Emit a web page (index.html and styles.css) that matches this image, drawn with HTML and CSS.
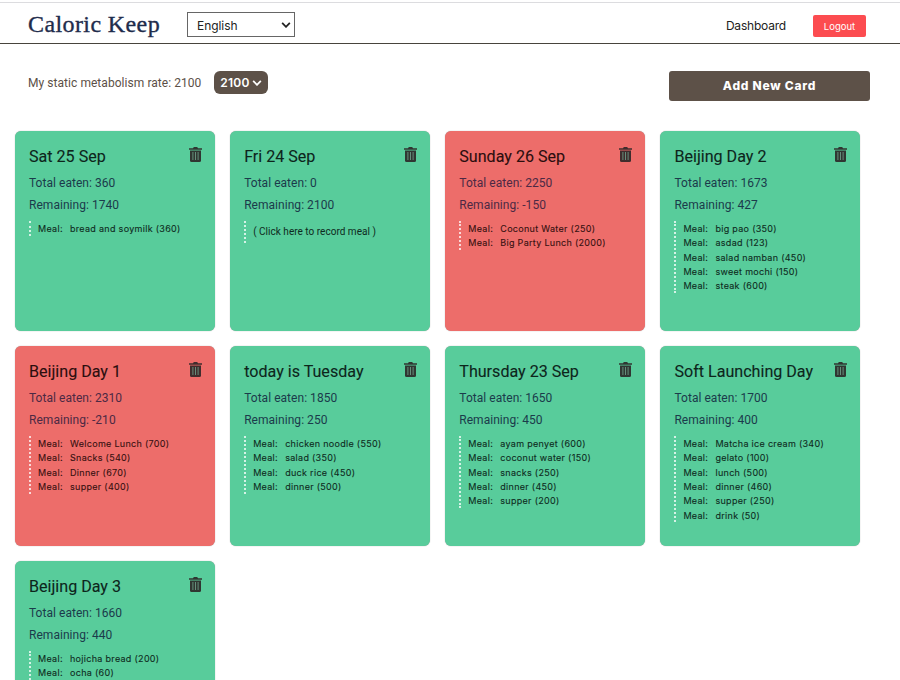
FILE: index.html
```html
<!DOCTYPE html>
<html lang="en">
<head>
<meta charset="utf-8">
<title>Caloric Keep</title>
<link rel="stylesheet" href="styles.css">
</head>
<body>
<svg class="defs" width="0" height="0"><symbol id="trash" viewBox="0 0 13 15"><path fill="currentColor" d="M0 1.2h4L4.8 0h3.4L9 1.2h4v1.6H0z"/><path fill="currentColor" d="M1 3.5h11V13.5Q12 15 10.5 15h-8Q1 15 1 13.5z"/><path class="slots" d="M3.9 5v8M6.5 5v8M9.1 5v8"/></symbol></svg>
<header class="header">
  <h1 class="logo">Caloric Keep</h1>
  <button class="language">English<svg class="chevron" viewBox="0 0 8 5"><path d="M.8.8 4 4 7.2.8"/></svg></button>
  <a class="dashboard">Dashboard</a>
  <button class="logout">Logout</button>
</header>
<section class="toolbar">
  <span class="rate">My static metabolism rate: 2100</span>
  <button class="rate-select">2100<svg class="chevron" viewBox="0 0 8 5"><path d="M.8.8 4 4 7.2.8"/></svg></button>
  <button class="add">Add New Card</button>
</section>
<main class="cards">
  <article class="card">
    <svg class="trash"><use href="#trash"/></svg>
    <h2>Sat 25 Sep</h2><p>Total eaten: 360</p><p>Remaining: 1740</p>
    <ul><li><b>Meal:</b>bread and soymilk (360)</li></ul>
  </article>
  <article class="card">
    <svg class="trash"><use href="#trash"/></svg>
    <h2>Fri 24 Sep</h2><p>Total eaten: 0</p><p>Remaining: 2100</p>
    <div class="empty">( Click here to record meal )</div>
  </article>
  <article class="card over">
    <svg class="trash"><use href="#trash"/></svg>
    <h2>Sunday 26 Sep</h2><p>Total eaten: 2250</p><p>Remaining: -150</p>
    <ul><li><b>Meal:</b>Coconut Water (250)</li><li><b>Meal:</b>Big Party Lunch (2000)</li></ul>
  </article>
  <article class="card">
    <svg class="trash"><use href="#trash"/></svg>
    <h2>Beijing Day 2</h2><p>Total eaten: 1673</p><p>Remaining: 427</p>
    <ul><li><b>Meal:</b>big pao (350)</li><li><b>Meal:</b>asdad (123)</li><li><b>Meal:</b>salad namban (450)</li><li><b>Meal:</b>sweet mochi (150)</li><li><b>Meal:</b>steak (600)</li></ul>
  </article>
  <article class="card over">
    <svg class="trash"><use href="#trash"/></svg>
    <h2>Beijing Day 1</h2><p>Total eaten: 2310</p><p>Remaining: -210</p>
    <ul><li><b>Meal:</b>Welcome Lunch (700)</li><li><b>Meal:</b>Snacks (540)</li><li><b>Meal:</b>Dinner (670)</li><li><b>Meal:</b>supper (400)</li></ul>
  </article>
  <article class="card">
    <svg class="trash"><use href="#trash"/></svg>
    <h2>today is Tuesday</h2><p>Total eaten: 1850</p><p>Remaining: 250</p>
    <ul><li><b>Meal:</b>chicken noodle (550)</li><li><b>Meal:</b>salad (350)</li><li><b>Meal:</b>duck rice (450)</li><li><b>Meal:</b>dinner (500)</li></ul>
  </article>
  <article class="card">
    <svg class="trash"><use href="#trash"/></svg>
    <h2>Thursday 23 Sep</h2><p>Total eaten: 1650</p><p>Remaining: 450</p>
    <ul><li><b>Meal:</b>ayam penyet (600)</li><li><b>Meal:</b>coconut water (150)</li><li><b>Meal:</b>snacks (250)</li><li><b>Meal:</b>dinner (450)</li><li><b>Meal:</b>supper (200)</li></ul>
  </article>
  <article class="card">
    <svg class="trash"><use href="#trash"/></svg>
    <h2>Soft Launching Day</h2><p>Total eaten: 1700</p><p>Remaining: 400</p>
    <ul><li><b>Meal:</b>Matcha ice cream (340)</li><li><b>Meal:</b>gelato (100)</li><li><b>Meal:</b>lunch (500)</li><li><b>Meal:</b>dinner (460)</li><li><b>Meal:</b>supper (250)</li><li><b>Meal:</b>drink (50)</li></ul>
  </article>
  <article class="card last">
    <svg class="trash"><use href="#trash"/></svg>
    <h2>Beijing Day 3</h2><p>Total eaten: 1660</p><p>Remaining: 440</p>
    <ul><li><b>Meal:</b>hojicha bread (200)</li><li><b>Meal:</b>ocha (60)</li></ul>
  </article>
</main>
</body>
</html>
```
FILE: styles.css
```css
* { box-sizing: border-box; }
body { height: 680px; overflow: hidden; display: flow-root; margin: 0; background: #fff; color: #222; font-family: Roboto, sans-serif; }
h1, h2, p, ul { margin: 0; padding: 0; font-weight: 400; }
button { border: 0; padding: 0; margin: 0; font-family: Inter, sans-serif; }
.defs { position: absolute; }

.header {
  display: flex;
  align-items: center;
  height: 42px;
  margin-top: 2px;
  padding: 3px 34px 0 28px;
  border-top: 1px solid #dcdcdf;
  border-bottom: 1px solid #48443d;
}
.logo {
  width: 159px;
  margin-top: -2px;
  color: #1f2c4c;
  font: 400 24px/30px "Liberation Serif", serif;
  letter-spacing: .4px;
  -webkit-text-stroke: .35px #1f2c4c;
  white-space: nowrap;
}
.language {
  display: flex;
  align-items: center;
  justify-content: space-between;
  width: 108px;
  height: 25px;
  padding: 1px 3px 0 9px;
  border: 1px solid #666;
  background: #fff;
  color: #222;
  font-size: 12px;
  letter-spacing: -.05px;
}
.chevron { width: 10px; height: 6px; fill: none; stroke: currentColor; stroke-width: 1.5; }
.dashboard { margin: 2px 0 0 auto; font: 12px Inter, sans-serif; letter-spacing: -.2px; }
.logout {
  width: 53px;
  height: 22px;
  margin: 2px 0 0 27px;
  padding-top: 1px;
  border-radius: 2px;
  background: #fc4c50;
  color: #fff;
  font-size: 9.5px;
}

.toolbar { display: flex; height: 87px; padding: 27px 30px 0 28px; color: #5c5047; }
.rate { width: 186px; padding-top: 4px; font-size: 12px; line-height: 16px; letter-spacing: .05px; white-space: nowrap; }
.rate-select {
  display: flex;
  align-items: center;
  justify-content: center;
  gap: 2px;
  width: 54px;
  height: 23px;
  border-radius: 6px;
  background: #5d5148;
  color: #fff;
  font-size: 12px;
  font-weight: 600;
  letter-spacing: .25px;
}
.add {
  width: 201px;
  height: 30px;
  margin-left: auto;
  padding-bottom: 2px;
  border-radius: 3px;
  background: #5d5148;
  color: #fff;
  font-size: 12px;
  font-weight: 800;
  letter-spacing: .75px;
}

.cards {
  display: grid;
  grid-template-columns: repeat(4, 200px);
  grid-template-rows: 200px 200px 119px;
  gap: 15px 15.15px;
  padding-left: 15px;
}
.card {
  position: relative;
  padding: 14px;
  border-radius: 6px;
  background: #58cc9b;
  box-shadow: 0 0 1px rgba(0, 0, 0, .45);
  color: #0e2a20;
}
.last { overflow: hidden; border-radius: 6px 6px 0 0; }
.over { background: #ed6d6a; color: #351010; }
.trash { position: absolute; top: 16px; right: 13px; width: 13px; height: 15px; color: #303632; }
.slots { stroke: #6a9983; stroke-width: .9; }
.over .trash { color: #402d2d; }
h2 { font-size: 16.1px; line-height: 24px; color: #0d251b; white-space: nowrap; -webkit-text-stroke: .1px; }
.over h2 { color: #2b0e0e; }
p { font-size: 12px; line-height: 21.7px; color: #1b3b4b; letter-spacing: .04px; }
h2 + p { margin-top: 4px; }
.over p { color: #4c2944; }
ul, .empty { margin-top: 5px; padding-left: 7px; border-left: 2px dotted rgba(255, 255, 255, .75); }
ul {
  list-style: none;
  font: 9px/14.35px Inter, sans-serif;
  letter-spacing: .3px;
  -webkit-text-stroke: .1px;
}
li { position: relative; top: .5px; }
li b { display: inline-block; width: 32px; font-weight: 400; }
.empty { font-size: 10px; line-height: 22px; letter-spacing: .02px; }
```
